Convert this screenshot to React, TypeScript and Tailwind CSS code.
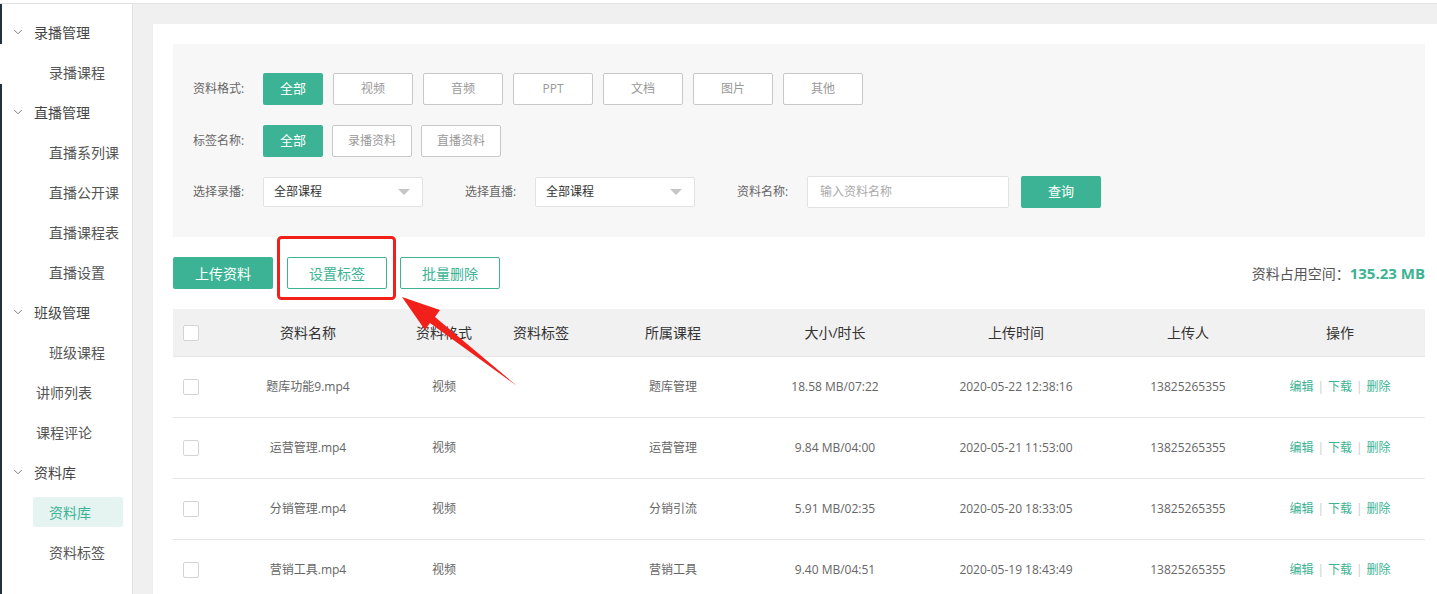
import { ChevronDown } from 'lucide-react';

const FORMATS = ['视频', '音频', 'PPT', '文档', '图片', '其他'];
const TAGS = ['录播资料', '直播资料'];

const ROWS = [
  { name: '题库功能9.mp4', format: '视频', course: '题库管理', size: '18.58 MB/07:22', time: '2020-05-22 12:38:16' },
  { name: '运营管理.mp4', format: '视频', course: '运营管理', size: '9.84 MB/04:00', time: '2020-05-21 11:53:00' },
  { name: '分销管理.mp4', format: '视频', course: '分销引流', size: '5.91 MB/02:35', time: '2020-05-20 18:33:05' },
  { name: '营销工具.mp4', format: '视频', course: '营销工具', size: '9.40 MB/04:51', time: '2020-05-19 18:43:49' },
];

type NavItem =
  | { kind: 'group'; label: string }
  | { kind: 'sub'; label: string; active?: boolean }
  | { kind: 'single'; label: string };

const NAV: NavItem[] = [
  { kind: 'group', label: '录播管理' },
  { kind: 'sub', label: '录播课程' },
  { kind: 'group', label: '直播管理' },
  { kind: 'sub', label: '直播系列课' },
  { kind: 'sub', label: '直播公开课' },
  { kind: 'sub', label: '直播课程表' },
  { kind: 'sub', label: '直播设置' },
  { kind: 'group', label: '班级管理' },
  { kind: 'sub', label: '班级课程' },
  { kind: 'single', label: '讲师列表' },
  { kind: 'single', label: '课程评论' },
  { kind: 'group', label: '资料库' },
  { kind: 'sub', label: '资料库', active: true },
  { kind: 'sub', label: '资料标签' },
];

const COLS = 'grid grid-cols-[40px_190px_82px_112px_152px_172px_190px_154px_150px_1fr] items-center';

function Sidebar() {
  return (
    <aside className="w-[133px] shrink-0 bg-white border-r border-[#e2e2e2] flex">
      {/* dark edge of the outer nav */}
      <div className="w-[2px] flex flex-col">
        <div className="h-[40px] bg-[#24313b]" />
        <div className="h-[40px] bg-white" />
        <div className="flex-1 bg-[#24313b]" />
      </div>
      <nav className="flex-1 pt-[8px] text-[14px]">
        {NAV.map((item, i) => {
          if (item.kind === 'group') {
            return (
              <div key={i} className="h-10 flex items-center pl-[9px] text-[#444]">
                <ChevronDown size={14} strokeWidth={1.6} className="text-[#777]" />
                <span className="ml-[9px]">{item.label}</span>
              </div>
            );
          }
          if (item.kind === 'single') {
            return (
              <div key={i} className="h-10 flex items-center pl-[34px] text-[#555]">
                {item.label}
              </div>
            );
          }
          if (item.active) {
            return (
              <div key={i} className="h-10 flex items-center">
                <div className="ml-[31px] w-[90px] h-[30px] rounded-[2px] bg-[#e5f4f1] flex items-center pl-4 text-[#3cb394]">
                  {item.label}
                </div>
              </div>
            );
          }
          return (
            <div key={i} className="h-10 flex items-center pl-[47px] text-[#555]">
              {item.label}
            </div>
          );
        })}
      </nav>
    </aside>
  );
}

function Chip({ label, active }: { label: string; active?: boolean }) {
  return active ? (
    <div className="w-[60px] h-8 rounded-[2px] bg-[#3cb394] text-white text-[13px] flex items-center justify-center">
      {label}
    </div>
  ) : (
    <div className="w-[80px] h-8 rounded-[2px] border border-[#c8c8c8] bg-white text-[#999] text-[12px] flex items-center justify-center">
      {label}
    </div>
  );
}

function Select() {
  return (
    <div className="w-[160px] h-[30px] bg-white border border-[#e2e2e2] rounded-[2px] flex items-center justify-between pl-[10px] pr-[12px] text-[12px] text-[#333]">
      <span>全部课程</span>
      <span className="w-0 h-0 border-l-[6px] border-r-[6px] border-t-[6px] border-l-transparent border-r-transparent border-t-[#c6c6c6]" />
    </div>
  );
}

function FilterPanel() {
  return (
    <div className="bg-[#f7f7f7] pl-5 pt-[29px] pb-[30px] flex flex-col gap-5 text-[12px]">
      <div className="flex items-center">
        <span className="w-[70px] text-[#666]">资料格式:</span>
        <div className="flex gap-[10px]">
          <Chip label="全部" active />
          {FORMATS.map((f) => (
            <Chip key={f} label={f} />
          ))}
        </div>
      </div>
      <div className="flex items-center">
        <span className="w-[70px] text-[#666]">标签名称:</span>
        <div className="flex gap-[9px]">
          <Chip label="全部" active />
          {TAGS.map((f) => (
            <Chip key={f} label={f} />
          ))}
        </div>
      </div>
      <div className="flex items-center h-[30px]">
        <span className="w-[70px] text-[#666]">选择录播:</span>
        <Select />
        <span className="w-[70px] ml-[42px] text-[#666]">选择直播:</span>
        <Select />
        <span className="w-[70px] ml-[42px] text-[#666]">资料名称:</span>
        <div className="w-[202px] h-[32px] bg-white border border-[#e2e2e2] rounded-[2px] flex items-center pl-[12px] text-[#aaa]">
          输入资料名称
        </div>
        <div className="ml-[12px] w-[80px] h-[32px] rounded-[2px] bg-[#3cb394] text-white text-[13px] flex items-center justify-center">
          查询
        </div>
      </div>
    </div>
  );
}

function Table() {
  return (
    <div className="text-[12px]">
      <div className={`${COLS} h-12 bg-[#f1f1f1] border-b border-[#e4e4e4] text-[14px] text-[#333]`}>
        <div className="pl-[10px]">
          <div className="w-4 h-4 bg-white border border-[#d4d4d4] rounded-[2px]" />
        </div>
        <div className="text-center">资料名称</div>
        <div className="text-center">资料格式</div>
        <div className="text-center">资料标签</div>
        <div className="text-center">所属课程</div>
        <div className="text-center">大小/时长</div>
        <div className="text-center">上传时间</div>
        <div className="text-center">上传人</div>
        <div className="text-center">操作</div>
        <div />
      </div>
      {ROWS.map((r) => (
        <div key={r.name} className={`${COLS} h-[61px] border-b border-[#e6e6e6] text-[#666]`}>
          <div className="pl-[10px]">
            <div className="w-4 h-4 bg-white border border-[#d4d4d4] rounded-[2px]" />
          </div>
          <div className="text-center">{r.name}</div>
          <div className="text-center">{r.format}</div>
          <div className="text-center" />
          <div className="text-center">{r.course}</div>
          <div className="text-center">{r.size}</div>
          <div className="text-center">{r.time}</div>
          <div className="text-center">13825265355</div>
          <div className="flex items-center justify-center text-[#3cb394]">
            <span>编辑</span>
            <span className="mx-[4px] text-[#ccc]">|</span>
            <span>下载</span>
            <span className="mx-[4px] text-[#ccc]">|</span>
            <span>删除</span>
          </div>
          <div />
        </div>
      ))}
    </div>
  );
}

export default function App() {
  return (
    <div className="relative w-[1437px] h-[594px] overflow-hidden flex flex-col bg-[#f0f0f0] font-['Open_Sans','Noto_Sans_CJK_SC',sans-serif]">
      <div className="h-[4px] shrink-0 bg-white border-b border-[#e2e2e2]" />
      <div className="flex flex-1 min-h-0">
        <Sidebar />
        <main className="flex-1 min-w-0 pl-5 pt-5">
          <div className="h-full bg-white pl-5 pt-5 pr-3">
            <FilterPanel />

            <div className="flex items-center justify-between mt-[20px] mb-[20px]">
              <div className="flex items-center">
                <div className="w-[100px] h-[32px] rounded-[2px] bg-[#3cb394] text-white text-[14px] flex items-center justify-center">
                  上传资料
                </div>
                <div className="ml-[14px] w-[100px] h-[32px] rounded-[2px] border border-[#3cb394] bg-white text-[#3cb394] text-[14px] flex items-center justify-center">
                  设置标签
                </div>
                <div className="ml-[13px] w-[100px] h-[32px] rounded-[2px] border border-[#3cb394] bg-white text-[#3cb394] text-[14px] flex items-center justify-center">
                  批量删除
                </div>
              </div>
              <div className="flex items-baseline text-[13px] text-[#555]">
                <span className="text-[14px]">资料占用空间：</span>
                <span className="text-[15px] font-bold text-[#3cb394]">135.23 MB</span>
              </div>
            </div>

            <Table />
          </div>
        </main>
      </div>

      {/* annotation: red highlight box and arrow */}
      <svg className="absolute inset-0 pointer-events-none" width="1437" height="594" viewBox="0 0 1437 594">
        <rect x="278.5" y="237.5" width="116" height="61" rx="3" fill="none" stroke="#f2201b" strokeWidth="3" />
        <polygon
          points="402,297 440,310 435,317 517,386 430,323 425,330"
          fill="#f2201b"
        />
      </svg>
    </div>
  );
}
